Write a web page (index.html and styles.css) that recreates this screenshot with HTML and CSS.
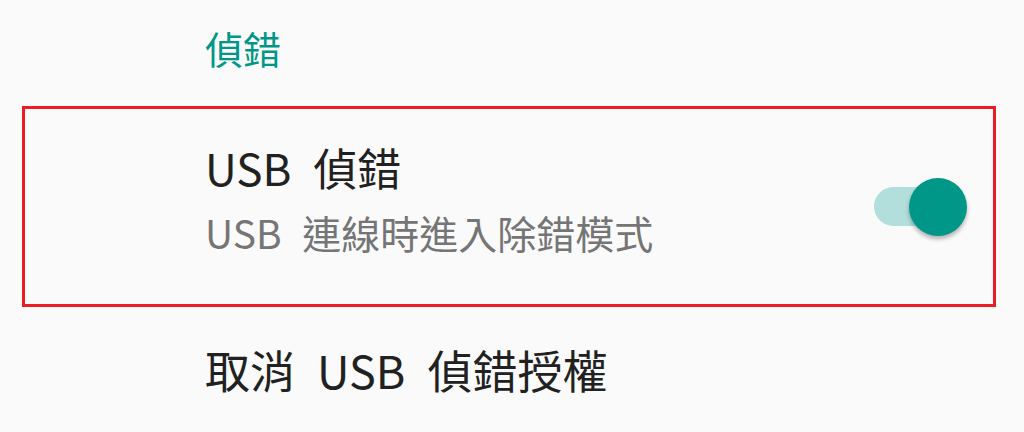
FILE: index.html
```html
<!DOCTYPE html>
<html lang="zh-Hant">
<head>
<meta charset="utf-8">
<link rel="stylesheet" href="styles.css">
</head>
<body>
<div class="category">偵錯</div>
<div class="item highlighted">
  <div class="texts">
    <div class="title">USB 偵錯</div>
    <div class="summary">USB 連線時進入除錯模式</div>
  </div>
  <div class="switch">
    <div class="track"></div>
    <div class="thumb"></div>
  </div>
</div>
<div class="item plain">
  <div class="texts">
    <div class="title big">取消 USB 偵錯授權</div>
  </div>
</div>
</body>
</html>
```
FILE: styles.css
```css
html, body {
  margin: 0;
  padding: 0;
  background: #fafafa;
  font-family: "Noto Sans CJK TC", "Noto Sans", sans-serif;
}
body {
  width: 1024px;
  height: 432px;
  overflow: hidden;
}
.category {
  height: 106px;
  box-sizing: border-box;
  padding-left: 205px;
  padding-top: 22px;
  font-size: 38px;
  line-height: 52px;
  color: #009688;
}
.item {
  display: flex;
  align-items: center;
}
.highlighted {
  width: 974px;
  height: 201px;
  box-sizing: border-box;
  margin-left: 22px;
  border: 3px solid #ed1c24;
  padding-left: 180px;
  padding-right: 26px;
}
.highlighted .texts {
  padding-bottom: 14px;
}
.texts {
  flex: 1;
  display: flex;
  flex-direction: column;
}
.title {
  font-size: 44px;
  line-height: 56px;
  color: #212121;
  word-spacing: 12px;
}
.title.big {
  font-size: 45px;
}
.summary {
  margin-top: 9px;
  font-size: 39px;
  line-height: 56px;
  color: #757575;
  word-spacing: 12px;
}
.switch {
  position: relative;
  width: 93px;
  height: 58px;
}
.track {
  position: absolute;
  left: 0;
  top: 9px;
  width: 80px;
  height: 39px;
  border-radius: 20px;
  background: #b2dfdb;
}
.thumb {
  position: absolute;
  right: 0;
  top: 0;
  width: 58px;
  height: 58px;
  border-radius: 50%;
  background: #009688;
  box-shadow: 0 3px 4px rgba(0,0,0,0.3);
}
.plain {
  height: 125px;
  padding-left: 205px;
}
```
